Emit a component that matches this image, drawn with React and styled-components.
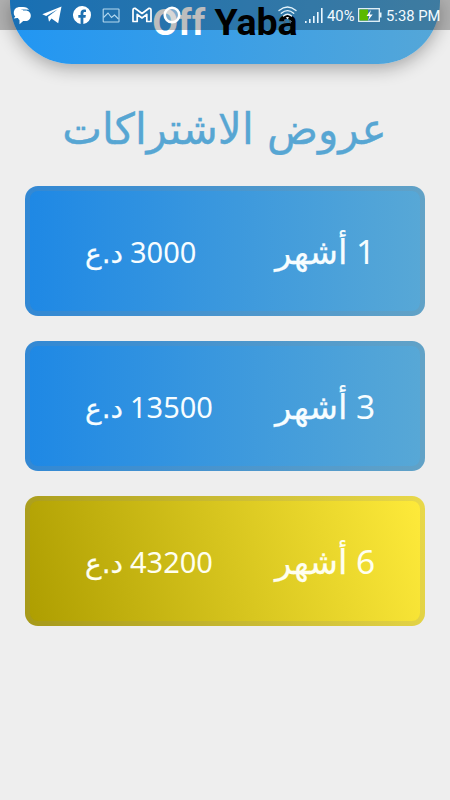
import React from 'react';
import styled, { createGlobalStyle } from 'styled-components';

const GlobalStyle = createGlobalStyle`
  * { box-sizing: border-box; }
  body { margin: 0; background: #eeeeee; }
`;

const Screen = styled.div`
  position: relative;
  width: 450px;
  height: 800px;
  overflow: hidden;
  background: #eeeeee;
  font-family: 'DejaVu Sans', sans-serif;
`;

const StatusBar = styled.div`
  position: absolute;
  inset: 0 0 auto 0;
  z-index: 2;
  height: 30px;
  padding: 0 10px 0 13px;
  display: flex;
  justify-content: space-between;
  align-items: center;
  background: rgba(0, 0, 0, 0.26);
`;

const StatusGroup = styled.div`
  display: flex;
  align-items: center;
  gap: ${(p) => p.$gap}px;
  color: #f3faff;
  font: 400 14.8px/30px Roboto, sans-serif;
  white-space: nowrap;
  svg { display: block; flex: none; }
`;

const StatusText = styled.span`
  padding-top: 2px;
  width: ${(p) => p.$width}px;
`;

const Header = styled.header`
  height: 64px;
  margin: 0 10px;
  padding-top: 1px;
  border-radius: 0 0 62px 62px;
  background: linear-gradient(90deg, #2196f3, #55a7d8);
  box-shadow: 0 4px 18px rgba(0, 0, 0, 0.32);
  display: flex;
  justify-content: center;
`;

const Brand = styled.h1`
  margin: 0;
  font: 700 37.5px/42px Roboto, sans-serif;
  color: #000;
  white-space: nowrap;
`;

const BrandLight = styled.span`
  color: #fff;
`;

const Title = styled.h2`
  margin: 30px 0 0;
  height: 92px;
  display: flex;
  justify-content: center;
  font: 400 43px/70px 'DejaVu Sans', sans-serif;
  color: #57a6d3;
`;

const TitleText = styled.span`
  display: block;
  flex: none;
  white-space: nowrap;
  transform: scaleX(0.98);
  -webkit-text-stroke: 0.4px currentColor;
`;

const Offers = styled.main`
  display: grid;
  gap: 25px;
  padding: 0 25px;
`;

const gradients = {
  blue: 'linear-gradient(90deg, #1e88e5, #58a8d6)',
  gold: 'linear-gradient(73deg, #ad9d00, #ffeb3b)',
};

const OfferCard = styled.button`
  height: 130px;
  padding: 0 0 0 55px;
  border: 5px solid rgba(140, 140, 140, 0.19);
  border-radius: 13px;
  background: ${(p) => gradients[p.$tone]} border-box;
  color: ${(p) => (p.$tone === 'gold' ? '#fffff0' : '#f7fdff')};
  display: grid;
  grid-template-columns: 190px 1fr;
  align-items: center;
  text-align: left;
`;

const Label = styled.span`
  display: flex;
  flex-direction: row-reverse;
  justify-content: flex-end;
  align-items: baseline;
  gap: ${(p) => p.$gap}px;
  padding-top: ${(p) => p.$drop}px;
  line-height: 60px;
  font-family: 'Noto Sans', sans-serif;
  font-size: ${(p) => p.$size}px;
`;

const Word = styled.span`
  display: block;
  width: ${(p) => p.$width}px;
  font-family: 'DejaVu Sans', sans-serif;
  font-size: ${(p) => p.$size}px;
  white-space: nowrap;
  -webkit-text-stroke: 0.25px currentColor;
`;

const MessageIcon = () => (
  <svg width="18" height="19" viewBox="0 0 18 19" fill="#fff">
    <path d="M.8 7C.8 3 3.500 1 7 1h3c3 0 5 1.300 6 3-2-.6-8-.9-10 1C4.300 6.500 4 8 4.300 12L.8 12.500l1.500-2.200C1.200 9.500.8 8.500.8 7z" />
    <path d="M4.600 9.500C4.600 6.300 7 4.500 10 4.500h2.500c3 0 5.300 2.200 5.300 5.200s-2.200 5.300-5.300 5.300h-2.300L6.500 18.300v-4.300C5.200 13 4.600 11.500 4.600 9.500z" />
    <path d="M3 4h7v8H3z" />
  </svg>
);
const TelegramIcon = () => (
  <svg width="20" height="18" viewBox="0 0 20 18" fill="#fff">
    <path d="M19.500.500L16.200 17.300 9.500 12.400 7 15.800 6 10.800 15.800 3.300 4.200 10 .3 8.300z" />
  </svg>
);
const FacebookIcon = () => (
  <svg width="18" height="18" viewBox="0 0 24 24" fill="#fff">
    <path d="M24 12a12 12 0 1 0-13.900 11.900v-8.400h-3V12h3V9.400c0-3 1.800-4.700 4.500-4.700 1.300 0 2.700.2 2.700.2v3h-1.500c-1.500 0-2 .9-2 1.900V12h3.400l-.6 3.500h-2.800v8.400A12 12 0 0 0 24 12z" />
  </svg>
);
const PictureIcon = () => (
  <svg width="19" height="15" viewBox="-.5 0 19 15" fill="none" stroke="#b5d9ef" strokeWidth="1.100">
    <rect x=".7" y="1" width="15.800" height="13" rx=".6" />
    <path d="M1 9.500L5.500 5l3.500 4.500 3-2.500 4 4" />
  </svg>
);
const MailIcon = () => (
  <svg width="20" height="16" viewBox="0 0 20 16" fill="none" stroke="#fff" strokeWidth="1.700" strokeLinejoin="round">
    <path d="M1 3.200Q1 1 3 1.300L10 6.500 17 1.300Q19 1 19 3.200V14.500H14.800V7.300L10 11 5.200 7.300V14.500H1z" />
  </svg>
);
const RingIcon = () => (
  <svg width="18" height="18" viewBox="0 0 18 18" fill="rgba(255,255,255,.4)" stroke="#fff" strokeWidth="2.600">
    <circle cx="9" cy="9" r="7.300" />
  </svg>
);
const WifiIcon = () => (
  <svg width="19" height="18" viewBox="0 0 19 18" fill="none" stroke="#e5f4fc" strokeWidth="1.300" strokeLinecap="round">
    <path d="M1 4.500Q9.500-2.500 18 4.500M3.300 7.300Q9.500 2 15.700 7.300M5.500 10Q9.500 6.500 13.500 10" />
    <path d="M7.800 11.500Q9.500 10.500 11.200 11.500L9.500 13.300z" fill="#fff" stroke="none" />
    <path d="M6.500 14v2.500M5.300 15.500l1.200 1.200 1.200-1.200M12.500 17v-2.500M11.300 15.700l1.200-1.200 1.200 1.200" stroke="#4d6575" strokeWidth="1" />
  </svg>
);
const SignalIcon = () => (
  <svg width="18" height="17" viewBox="0 0 18 17" fill="#eaf7ff">
    <rect x="0" y="14" width="1.600" height="2" />
    <rect x="4" y="12" width="1.600" height="4" />
    <rect x="8" y="9" width="1.600" height="7" />
    <rect x="12" y="5" width="1.600" height="11" />
    <rect x="16" y="1" width="1.600" height="15" />
  </svg>
);
const BatteryIcon = () => (
  <svg width="24" height="14" viewBox="0 0 24 14" fill="none">
    <rect x=".7" y=".7" width="20.600" height="12.600" stroke="#e7f4fb" strokeWidth="1.300" />
    <rect x="1.500" y="1.500" width="8.500" height="11" fill="#5bb900" />
    <path d="M22 4.500h1.500v5H22z" fill="#e7f4fb" />
    <path d="M13 2L8.500 8h3l-1.500 4.500L14.700 6.500h-3z" fill="#fff" />
  </svg>
);

const offers = [
  { months: '1', price: '3000', tone: 'blue' },
  { months: '3', price: '13500', tone: 'blue' },
  { months: '6', price: '43200', tone: 'gold' },
];

export default function App() {
  return (
    <Screen>
      <GlobalStyle />
      <StatusBar>
        <StatusGroup $gap={11}>
          <MessageIcon />
          <TelegramIcon />
          <FacebookIcon />
          <PictureIcon />
          <MailIcon />
          <RingIcon />
        </StatusGroup>
        <StatusGroup $gap={4}>
          <WifiIcon />
          <span />
          <SignalIcon />
          <StatusText $width={27}>40%</StatusText>
          <BatteryIcon />
          <StatusText $width={54}>5:38 PM</StatusText>
        </StatusGroup>
      </StatusBar>
      <Header>
        <Brand><BrandLight>Off</BrandLight> Yaba</Brand>
      </Header>
      <Title><TitleText dir="rtl">عروض الاشتراكات</TitleText></Title>
      <Offers>
        {offers.map((o) => (
          <OfferCard key={o.months} $tone={o.tone}>
            <Label $gap={9} $size={29} $drop={4}>
              <span>{o.price}</span>
              <Word $size={28} $width={36}>د.ع</Word>
            </Label>
            <Label $gap={9} $size={33.5} $drop={0}>
              <span>{o.months}</span>
              <Word $size={34} $width={72}>أشهر</Word>
            </Label>
          </OfferCard>
        ))}
      </Offers>
    </Screen>
  );
}
